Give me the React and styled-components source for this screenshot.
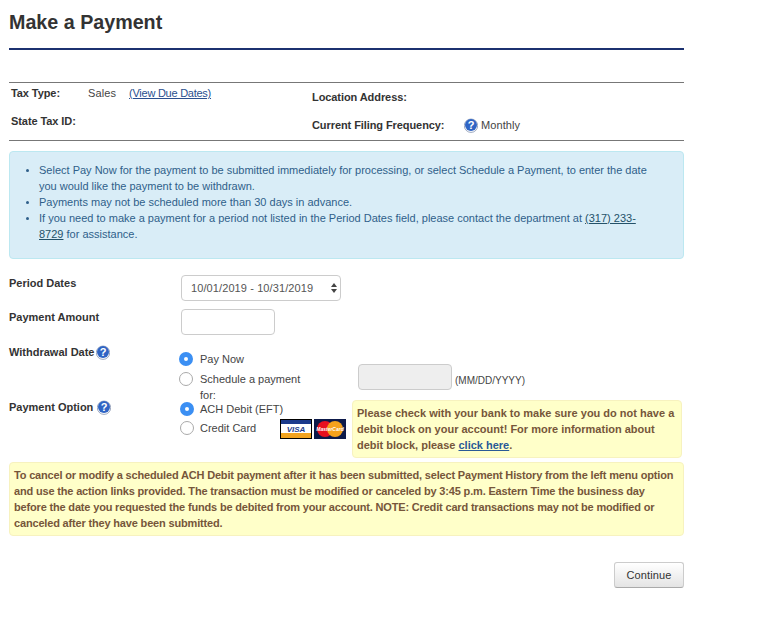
import React from "react";
import styled, { createGlobalStyle } from "styled-components";

const GlobalStyle = createGlobalStyle`
  html, body {
    margin: 0;
    padding: 0;
    background: #fff;
    font-family: "Liberation Sans", Arial, sans-serif;
    color: #333;
  }
`;

const Page = styled.div`
  width: 675px;
  margin-left: 9px;
  padding-bottom: 29px;
`;

const Title = styled.h1`
  margin: 0;
  height: 48px;
  padding-top: 10px;
  box-sizing: border-box;
  font-size: 19.7px;
  line-height: 24px;
  font-weight: bold;
  color: #333;
`;

const TitleRule = styled.div`
  height: 2px;
  background: #1c3170;
`;

const InfoTable = styled.div`
  margin-top: 32px;
  height: 57px;
  border-top: 1px solid #777;
  border-bottom: 1px solid #777;
  display: grid;
  grid-template-columns: 303px 1fr;
  font-size: 11px;
`;

const InfoColumn = styled.div`
  display: flex;
  flex-direction: column;
  gap: 14px;
  padding-top: ${(p) => p.$top}px;
  padding-left: ${(p) => p.$left}px;
`;

const InfoRow = styled.div`
  display: flex;
  align-items: center;
  height: 14px;
  white-space: nowrap;
`;

const InfoLabel = styled.b`
  display: inline-block;
  width: ${(p) => p.$width}px;
  color: #333;
  letter-spacing: -0.08px;
`;

const InfoValue = styled.span`
  color: #444;
  margin-right: ${(p) => p.$gap || 0}px;
  letter-spacing: 0.1px;
`;

const DueLink = styled.a`
  color: #2a4f8f;
  text-decoration: underline;
  letter-spacing: -0.25px;
`;

const InfoAlert = styled.div`
  margin-top: 10px;
  height: 108px;
  box-sizing: border-box;
  background: #d9edf7;
  border: 1px solid #bce8f1;
  border-radius: 4px;
  padding: 10px 30px 0 0;
  color: #2f5f8a;
  font-size: 11px;
  line-height: 16px;
`;

const AlertList = styled.ul`
  margin: 0;
  padding-left: 29px;

  li::marker {
    font-size: 10px;
  }
`;

const PhoneLink = styled.a`
  color: #245269;
  text-decoration: underline;
`;

const FormArea = styled.div`
  margin-top: 16px;
  font-size: 11px;
`;

const FormRow = styled.div`
  display: flex;
  align-items: flex-start;
  height: ${(p) => p.$height}px;
`;

const FieldLabel = styled.label`
  flex: none;
  display: flex;
  align-items: center;
  width: ${(p) => p.$width || 172}px;
  height: 14px;
  margin-top: ${(p) => p.$top || 0}px;
  font-weight: bold;
  color: #333;
  white-space: nowrap;
`;

const SelectWrap = styled.div`
  position: relative;
  width: 160px;
  height: 26px;
`;

const PeriodSelect = styled.select`
  appearance: none;
  width: 100%;
  height: 100%;
  padding: 0 0 0 9px;
  background: #fff;
  border: 1px solid #ccc;
  border-radius: 4px;
  font: 11px "Liberation Sans", Arial, sans-serif;
  letter-spacing: 0.1px;
  color: #555;
`;

const SelectArrows = styled.svg`
  position: absolute;
  right: 4px;
  top: 8px;
  pointer-events: none;
`;

const TextField = styled.input`
  display: block;
  flex: none;
  width: 94px;
  height: 26px;
  box-sizing: border-box;
  margin: ${(p) => p.$margin || 0};
  background: ${(p) => (p.disabled ? "#eee" : "#fff")};
  border: 1px solid #ccc;
  border-radius: 4px;
`;

const RadioColumn = styled.div`
  flex: none;
  display: flex;
  flex-direction: column;
  width: ${(p) => p.$width}px;
  margin-left: ${(p) => p.$left}px;
  padding-top: ${(p) => p.$top}px;
  font-size: 11px;
  color: #444;
`;

const RadioLine = styled.label`
  display: flex;
  align-items: flex-start;
  gap: ${(p) => p.$gap || 7}px;
  margin-bottom: ${(p) => p.$after || 0}px;
  line-height: 16px;
  white-space: nowrap;
`;

const RadioInput = styled.input.attrs({ type: "radio", readOnly: true })`
  appearance: none;
  flex: none;
  width: 14px;
  height: 14px;
  margin: 1px 0 0;
  box-sizing: border-box;
  border: 1px solid #aaa;
  border-radius: 50%;
  background: #fff;

  &:checked {
    border: 5px solid #3b8ff3;
    background: #fff;
  }
`;

const DateHint = styled.span`
  margin: 32px 0 0 3px;
  font-size: 10px;
  line-height: 12px;
  color: #444;
`;

const CardLogos = styled.div`
  display: flex;
  gap: 2px;
  margin-top: 20px;
`;

const YellowNote = styled.div`
  box-sizing: border-box;
  background: #ffffc9;
  border: 1px solid #f7f2bf;
  border-radius: 4px;
  color: #76563a;
  font-size: 11px;
  font-weight: bold;
  line-height: 16px;
`;

const DebitNote = styled(YellowNote)`
  flex: none;
  width: 330px;
  height: 58px;
  margin: 1px 0 0 6px;
  padding: 4px 4px 0 4px;
`;

const CancelNote = styled(YellowNote)`
  height: 74px;
  margin-top: 4px;
  padding: 4px 4px 0 4px;
  letter-spacing: -0.17px;
`;

const NoteLink = styled.a`
  color: #2a5a96;
  text-decoration: underline;
`;

const ButtonRow = styled.div`
  display: flex;
  justify-content: flex-end;
  margin-top: 26px;
`;

const ContinueButton = styled.button`
  width: 70px;
  height: 26px;
  padding: 0;
  font: 11px "Liberation Sans", Arial, sans-serif;
  letter-spacing: 0.1px;
  color: #333;
  background: linear-gradient(#fff, #e4e4e4);
  border: 1px solid #ccc;
  border-bottom-color: #aaa;
  border-radius: 3px;
`;

const HelpGlyph = styled.svg`
  flex: none;
  margin-left: ${(p) => p.$left || 0}px;
  margin-right: ${(p) => p.$right || 0}px;
`;

const HelpIcon = ({ left, right }) => (
  <HelpGlyph $left={left} $right={right} width="14" height="15" viewBox="0 0 14 15">
    <circle cx="7" cy="7.7" r="6.7" fill="#fff" stroke="#5a6f96" strokeWidth="0.6" />
    <circle cx="7" cy="7" r="6" fill="#2f64c4" />
    <text x="7" y="11" textAnchor="middle" fontSize="11" fontWeight="bold" fill="#fff" fontFamily="Liberation Sans">?</text>
  </HelpGlyph>
);

const VisaLogo = () => (
  <svg width="32" height="20" viewBox="0 0 32 20">
    <rect width="32" height="20" fill="#000" />
    <rect x="1" y="1" width="30" height="18" fill="#fff" />
    <rect x="1" y="1" width="30" height="4" fill="#1b3a8c" />
    <rect x="1" y="14" width="30" height="5" fill="#f2a31f" />
    <text x="16" y="13" textAnchor="middle" fontSize="8" fontWeight="bold" fontStyle="italic" fill="#1b3a8c" fontFamily="Liberation Sans">VISA</text>
  </svg>
);

const MasterLogo = () => (
  <svg width="32" height="20" viewBox="0 0 32 20">
    <rect width="32" height="20" fill="#0d1a4a" />
    <circle cx="11" cy="10" r="8" fill="#e8101f" />
    <circle cx="21" cy="10" r="8" fill="#f6a21c" />
    <text x="16" y="12" textAnchor="middle" fontSize="5" fontWeight="bold" fontStyle="italic" fill="#fff" fontFamily="Liberation Sans">MasterCard</text>
  </svg>
);

export default function App() {
  return (
    <Page>
      <GlobalStyle />
      <Title>Make a Payment</Title>
      <TitleRule />

      <InfoTable>
        <InfoColumn $top={3} $left={2}>
          <InfoRow>
            <InfoLabel $width={77}>Tax Type:</InfoLabel>
            <InfoValue $gap={13}>Sales</InfoValue>
            <DueLink href="#">(View Due Dates)</DueLink>
          </InfoRow>
          <InfoRow>
            <InfoLabel>State Tax ID:</InfoLabel>
          </InfoRow>
        </InfoColumn>
        <InfoColumn $top={7} $left={0}>
          <InfoRow>
            <InfoLabel>Location Address:</InfoLabel>
          </InfoRow>
          <InfoRow>
            <InfoLabel $width={152}>Current Filing Frequency:</InfoLabel>
            <HelpIcon right={3} />
            <InfoValue>Monthly</InfoValue>
          </InfoRow>
        </InfoColumn>
      </InfoTable>

      <InfoAlert>
        <AlertList>
          <li>Select Pay Now for the payment to be submitted immediately for processing, or select Schedule a Payment, to enter the date you would like the payment to be withdrawn.</li>
          <li>Payments may not be scheduled more than 30 days in advance.</li>
          <li>If you need to make a payment for a period not listed in the Period Dates field, please contact the department at <PhoneLink href="#">(317) 233-8729</PhoneLink> for assistance.</li>
        </AlertList>
      </InfoAlert>

      <FormArea>
        <FormRow $height={34}>
          <FieldLabel $top={1}>Period Dates</FieldLabel>
          <SelectWrap>
            <PeriodSelect defaultValue="oct">
              <option value="oct">10/01/2019 - 10/31/2019</option>
            </PeriodSelect>
            <SelectArrows width="6" height="10" viewBox="0 0 6 10">
              <path d="M3 0 L6 4 L0 4 Z M3 10 L6 6 L0 6 Z" fill="#444" />
            </SelectArrows>
          </SelectWrap>
        </FormRow>
        <FormRow $height={34}>
          <FieldLabel $top={1}>Payment Amount</FieldLabel>
          <TextField />
        </FormRow>
        <FormRow $height={56}>
          <FieldLabel $top={2} $width={169}>Withdrawal Date<HelpIcon left={2} /></FieldLabel>
          <RadioColumn $width={129} $left={1} $top={8}>
            <RadioLine $after={4}><RadioInput name="when" defaultChecked />Pay Now</RadioLine>
            <RadioLine>
              <RadioInput name="when" />
              <span>Schedule a payment<br />for:</span>
            </RadioLine>
          </RadioColumn>
          <TextField disabled $margin="21px 0 0 50px" />
          <DateHint>(MM/DD/YYYY)</DateHint>
        </FormRow>
        <FormRow $height={59}>
          <FieldLabel $top={1} $width={171}>Payment Option<HelpIcon left={4} /></FieldLabel>
          <RadioColumn $width={100} $left={0} $top={2}>
            <RadioLine $after={3} $gap={6}><RadioInput name="how" defaultChecked />ACH Debit (EFT)</RadioLine>
            <RadioLine $gap={6}><RadioInput name="how" />Credit Card</RadioLine>
          </RadioColumn>
          <CardLogos>
            <VisaLogo />
            <MasterLogo />
          </CardLogos>
          <DebitNote>
            Please check with your bank to make sure you do not have a debit block on your account! For more information about debit block, please <NoteLink href="#">click here</NoteLink>.
          </DebitNote>
        </FormRow>
        <CancelNote>
          To cancel or modify a scheduled ACH Debit payment after it has been submitted, select Payment History from the left menu option and use the action links provided. The transaction must be modified or canceled by 3:45 p.m. Eastern Time the business day before the date you requested the funds be debited from your account. NOTE: Credit card transactions may not be modified or canceled after they have been submitted.
        </CancelNote>
      </FormArea>

      <ButtonRow>
        <ContinueButton>Continue</ContinueButton>
      </ButtonRow>
    </Page>
  );
}
